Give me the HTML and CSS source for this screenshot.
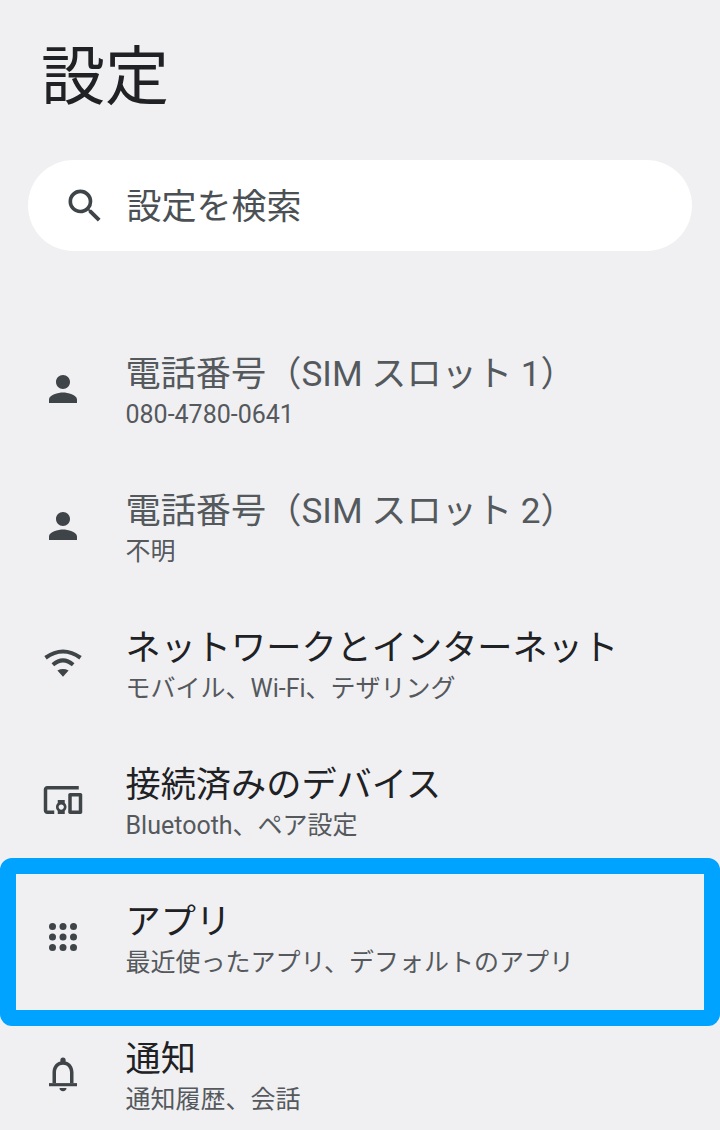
FILE: index.html
```html
<!DOCTYPE html>
<html lang="ja">
<head>
<meta charset="utf-8">
<title>設定</title>
<link rel="stylesheet" href="styles.css">
</head>
<body>
<main class="screen">
  <h1 class="title">設定</h1>
  <div class="search">
    <svg class="search-icon" viewBox="0 0 24 24"><path d="M15.5 14h-.79l-.28-.27A6.471 6.471 0 0 0 16 9.5 6.5 6.5 0 1 0 9.5 16c1.61 0 3.09-.59 4.23-1.57l.27.28v.79l5 4.99L20.49 19l-4.99-5zm-6 0C7.01 14 5 11.99 5 9.5S7.01 5 9.5 5 14 7.01 14 9.5 11.99 14 9.5 14z"/></svg>
    <span class="search-text">設定を検索</span>
  </div>
  <ul class="list">
    <li class="row">
      <svg class="icon" viewBox="0 0 24 24"><path d="M12 12c2.21 0 4-1.79 4-4s-1.79-4-4-4-4 1.79-4 4 1.79 4 4 4zm0 2c-2.67 0-8 1.34-8 4v2h16v-2c0-2.66-5.33-4-8-4z"/></svg>
      <div class="text"><div class="name muted">電話番号（SIM スロット 1）</div><div class="sub">080-4780-0641</div></div>
    </li>
    <li class="row">
      <svg class="icon" viewBox="0 0 24 24"><path d="M12 12c2.21 0 4-1.79 4-4s-1.79-4-4-4-4 1.79-4 4 1.79 4 4 4zm0 2c-2.67 0-8 1.34-8 4v2h16v-2c0-2.66-5.33-4-8-4z"/></svg>
      <div class="text"><div class="name muted">電話番号（SIM スロット 2）</div><div class="sub">不明</div></div>
    </li>
    <li class="row">
      <svg class="icon" viewBox="0 0 24 24"><path d="M8.800 16.300Q12 14.600 15.200 16.300L12 19.800z"/><path class="line" d="M6.200 13Q12 8 17.800 13"/><path class="line" d="M2 9Q12 1.800 22 9"/></svg>
      <div class="text"><div class="name">ネットワークとインターネット</div><div class="sub">モバイル、Wi-Fi、テザリング</div></div>
    </li>
    <li class="row">
      <svg class="icon" viewBox="0 0 24 24"><path d="M3 6h18V4H3c-1.100 0-2 .9-2 2v12c0 1.100.9 2 2 2h4v-2H3V6zm10 6H9v1.780c-.61.55-1 1.330-1 2.220s.39 1.670 1 2.220V20h4v-1.780c.61-.55 1-1.340 1-2.220s-.39-1.670-1-2.220V12zm-2 5.500c-.83 0-1.500-.67-1.500-1.500s.67-1.500 1.500-1.500 1.500.67 1.500 1.500-.67 1.500-1.500 1.500zM22 8h-6c-.5 0-1 .5-1 1v10c0 .5.5 1 1 1h6c.5 0 1-.5 1-1V9c0-.5-.5-1-1-1zm-1 10h-4v-8h4v8z"/></svg>
      <div class="text"><div class="name">接続済みのデバイス</div><div class="sub">Bluetooth、ペア設定</div></div>
    </li>
    <li class="row">
      <svg class="icon" viewBox="0 0 24 24"><circle cx="6" cy="6" r="2"/><circle cx="12" cy="6" r="2"/><circle cx="18" cy="6" r="2"/><circle cx="6" cy="12" r="2"/><circle cx="12" cy="12" r="2"/><circle cx="18" cy="12" r="2"/><circle cx="6" cy="18" r="2"/><circle cx="12" cy="18" r="2"/><circle cx="18" cy="18" r="2"/></svg>
      <div class="text"><div class="name">アプリ</div><div class="sub">最近使ったアプリ、デフォルトのアプリ</div></div>
    </li>
    <li class="row">
      <svg class="icon" viewBox="0 0 24 24"><path d="M12 21.800c1.100 0 2-.6 2-1.800h-4c0 1.200.9 1.800 2 1.800z"/><path d="M4 17.200h16V19H4z"/><path d="M6 17.200v-6c0-3.100 1.600-5.600 4.500-6.300V4a1.500 1.500 0 0 1 3 0v.9c2.900.7 4.500 3.200 4.500 6.300v6h-2v-6c0-2.500-1.500-4.500-4-4.500s-4 2-4 4.500v6z"/></svg>
      <div class="text"><div class="name">通知</div><div class="sub">通知履歴、会話</div></div>
    </li>
  </ul>
  <div class="highlight"></div>
</main>
</body>
</html>
```

FILE: styles.css
```css
* { box-sizing: border-box; }
html, body { margin: 0; padding: 0; }
body {
  width: 720px;
  height: 1130px;
  overflow: hidden;
  background: #f0f0f2;
  font-family: Roboto, "Noto Sans CJK JP", sans-serif;
}
.screen {
  position: relative;
  height: 1130px;
  overflow: hidden;
  padding-top: 33px;
}
.title {
  margin: 0 0 0 41px;
  font-size: 64px;
  line-height: 90px;
  font-weight: 400;
  color: #202124;
}
.search {
  display: flex;
  align-items: center;
  margin: 37px 28px 0;
  height: 91px;
  padding-left: 34.500px;
  gap: 20px;
  background: #fff;
  border-radius: 45.500px;
}
.search-icon { width: 44px; height: 44px; fill: #3f4448; flex: none; }
.search-text { font-size: 35px; color: #4b5054; margin-bottom: 4px; }
.list {
  list-style: none;
  margin: 71px 0 0;
  padding: 0;
}
.row {
  display: flex;
  align-items: center;
  height: 137px;
  padding-left: 42px;
  gap: 41.500px;
}
.icon { width: 42px; height: 42px; fill: #3f4448; flex: none; margin-top: -4px; }
.line { fill: none; stroke: #3f4448; stroke-width: 2.300; }
.text { min-width: 0; }
.name {
  font-size: 35.200px;
  line-height: 48px;
  color: #202124;
  white-space: nowrap;
}
.name.muted { color: #54595d; }
.sub {
  font-size: 25px;
  line-height: 34px;
  color: #55595d;
  white-space: nowrap;
}
.highlight {
  position: absolute;
  left: 0;
  top: 858px;
  width: 720px;
  height: 168px;
  border: 16px solid #00a3ff;
  border-radius: 12px;
}
```
